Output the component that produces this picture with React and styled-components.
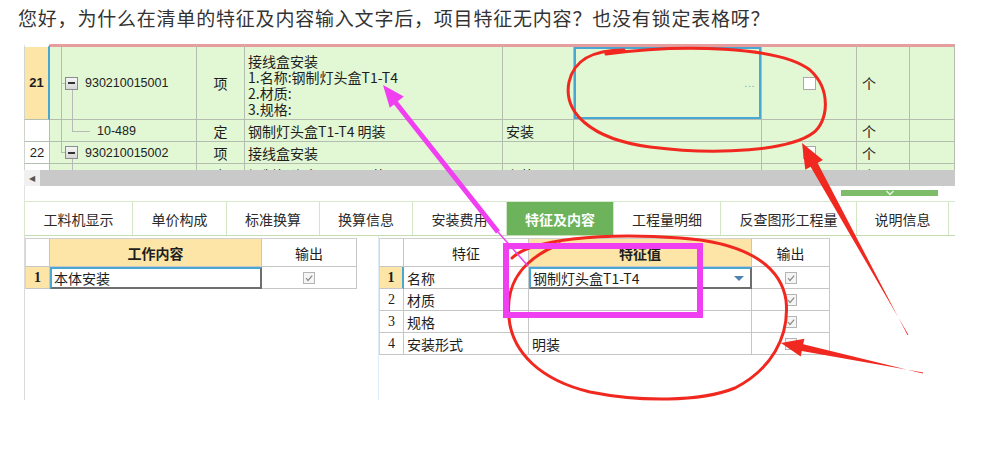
import React from 'react';
import styled, { createGlobalStyle } from 'styled-components';

const GlobalStyle = createGlobalStyle`
  body {
    margin: 0;
    background: #fff;
    font-family: "Noto Sans CJK SC", "Liberation Sans", sans-serif;
  }
`;

const GRID = '#b3bdb0';
const GREEN = '#e2f7d4';
const YELLOW = '#fce5a6';
const TEAL = '#4aa7d2';

const Page = styled.div`
  position: relative;
  width: 994px;
  height: 464px;
  overflow: hidden;
`;

const Question = styled.p`
  margin: 0;
  padding: 5px 0 0 18px;
  font-size: 19px;
  letter-spacing: 0.8px;
  line-height: 26px;
  color: #333;
`;

const Shot = styled.div`
  margin: 13px 0 0 24px;
  width: 931px;
  overflow: hidden;
`;

/* ---------- upper bill grid ---------- */

const TopTable = styled.div`
  height: 126px;
  overflow: hidden;
`;

const TopRow = styled.div`
  display: grid;
  grid-template-columns: 26px 147px 48px 258px 71px 188px 95px 53px 45px;
  height: ${(p) => p.$h}px;
`;

const Cell = styled.div`
  box-sizing: border-box;
  position: relative;
  background: ${(p) => p.$bg || GREEN};
  border-right: 1px solid ${GRID};
  border-bottom: 1px solid ${GRID};
  border-top: ${(p) => (p.$first ? '3px solid #e69d9d' : 'none')};
  box-shadow: ${(p) => (p.$sel ? `inset 0 0 0 2px ${TEAL}` : 'none')};
  display: flex;
  align-items: center;
  justify-content: ${(p) => p.$justify || 'flex-start'};
  padding: 0 ${(p) => p.$pr || 3}px 0 ${(p) => p.$pl || 3}px;
  font-size: 14px;
  line-height: 16px;
  color: #1e1e1e;
  white-space: nowrap;
  overflow: hidden;
`;

const NumCell = styled(Cell)`
  justify-content: center;
  border-left: 1px solid #cfd5cc;
  border-right: ${(p) => (p.$mark ? `2px solid ${TEAL}` : `1px solid ${GRID}`)};
  border-top: ${(p) => (p.$first ? '3px solid #fff' : 'none')};
  font-family: "Liberation Sans", sans-serif;
  font-size: 13px;
  font-weight: ${(p) => (p.$bold ? 700 : 400)};
`;

const Lines = styled(Cell)`
  display: block;
  padding-top: 6px;
`;

const Line = styled.div`
  height: 16px;
  line-height: 16px;
`;

const Code = styled.span`
  font-family: "Liberation Sans", sans-serif;
  font-size: 12.5px;
  color: #222;
`;

const TreeLine = styled.span`
  position: absolute;
  background: #b9b9b9;
  left: ${(p) => p.$x}px;
  top: ${(p) => p.$y}px;
  width: ${(p) => p.$w || 1}px;
  height: ${(p) => p.$h || 1}px;
`;

const Minus = styled.span`
  position: relative;
  box-sizing: border-box;
  width: 13px;
  height: 13px;
  margin-right: 7px;
  border: 1px solid #8c8c8c;
  background: linear-gradient(#f6f6f6, #d6d6d6);
  display: flex;
  align-items: center;
  justify-content: center;
  flex: none;

  &::after {
    content: '';
    width: 7px;
    height: 2px;
    background: #333;
  }
`;

const Dots = styled.span`
  color: #7ea6c6;
  font-family: "Liberation Sans", sans-serif;
  font-size: 11px;
  letter-spacing: 0.5px;
`;

const Box = styled.span`
  box-sizing: border-box;
  width: 13px;
  height: 13px;
  border: 1px solid #a9a9a9;
  background: #fff;
  display: flex;
  align-items: center;
  justify-content: center;
`;

const CheckBox = styled(Box)`
  width: 12px;
  height: 12px;
  border-color: #b4b4b4;
  background: #f5f5f5;
`;

const Check = () => (
  <CheckBox>
    <svg width="10" height="10" viewBox="0 0 10 10">
      <polyline points="2,5 4,7.5 8.2,2.6" fill="none" stroke="#8a8a8a" strokeWidth="1.2" />
    </svg>
  </CheckBox>
);

/* ---------- scrollbar + splitter ---------- */

const HScroll = styled.div`
  display: flex;
  height: 16px;
  background: #c9c9c9;
`;

const ScrollBtn = styled.div`
  width: 16px;
  background: #f0f0f0;
  display: flex;
  align-items: center;
  justify-content: center;
  color: #555;
  font-size: 8px;
  font-family: "DejaVu Sans", sans-serif;
`;

const Splitter = styled.div`
  box-sizing: border-box;
  height: 15px;
  padding: 4px 17px 0 0;
  display: flex;
  justify-content: flex-end;
  align-items: flex-start;
  border-left: 1px solid #e2e2e2;
`;

const Grip = styled.div`
  width: 97px;
  height: 6px;
  background: #7dbd69;
  display: flex;
  align-items: center;
  justify-content: center;
`;

/* ---------- tabs ---------- */

const Tabs = styled.div`
  box-sizing: border-box;
  display: flex;
  height: 35px;
  border-top: 1px solid #d6e9ca;
  border-bottom: 1px solid #c3dcb3;
  border-left: 1px solid #d6e9ca;
`;

const Tab = styled.div`
  box-sizing: border-box;
  flex: none;
  width: ${(p) => p.$w}px;
  border-right: 1px solid #d3e7c6;
  display: flex;
  align-items: center;
  justify-content: center;
  font-size: 14px;
  color: ${(p) => (p.$active ? '#fff' : '#2a2a2a')};
  background: ${(p) => (p.$active ? '#6cb35b' : '#fff')};
  font-weight: ${(p) => (p.$active ? 700 : 400)};
`;

const TabIcon = styled.span`
  margin-left: 5px;
  width: 10px;
  height: 12px;
  border: 2px solid #f06a4a;
  border-radius: 50%;
`;

/* ---------- lower panes ---------- */

const Lower = styled.div`
  display: flex;
  height: 164px;
`;

const LeftPane = styled.div`
  box-sizing: border-box;
  width: 354px;
  padding-top: 2px;
  border-left: 1px solid #dadada;
`;

const RightPane = styled.div`
  flex: 1;
  padding-top: 2px;
  border-left: 1px solid #dcebf6;
`;

const SubRow = styled.div`
  display: grid;
  grid-template-columns: ${(p) => p.$cols};
  height: ${(p) => p.$h || 22}px;
`;

const SubCell = styled.div`
  box-sizing: border-box;
  border-right: 1px solid #c6c6c6;
  border-bottom: 1px solid #c6c6c6;
  border-top: ${(p) => (p.$head ? '1px solid #d0d0d0' : 'none')};
  background: ${(p) => (p.$yellow ? YELLOW : '#fff')};
  display: flex;
  align-items: center;
  justify-content: ${(p) => (p.$center ? 'center' : 'flex-start')};
  padding: 0 3px;
  font-size: 14px;
  font-weight: ${(p) => (p.$bold ? 700 : 400)};
  color: #1e1e1e;
  white-space: nowrap;
  overflow: hidden;
`;

const SubNum = styled(SubCell)`
  justify-content: center;
  border-left: 1px solid #d6d6d6;
  border-right: ${(p) => (p.$mark ? `2px solid ${TEAL}` : '1px solid #c6c6c6')};
  font-family: "Liberation Serif", serif;
  font-size: 14px;
`;

const EditCell = styled(SubCell)`
  border-width: 2px;
  border-style: solid;
  border-color: ${TEAL} #6e6e6e #6e6e6e ${TEAL};
  justify-content: space-between;
  padding: 0 6px 0 2px;
`;

const DropArrow = styled.span`
  width: 0;
  height: 0;
  border-left: 5px solid transparent;
  border-right: 5px solid transparent;
  border-top: 5px solid #4f82b4;
`;

/* ---------- annotations ---------- */

const Marks = styled.svg`
  position: absolute;
  left: 0;
  top: 0;
  pointer-events: none;
`;

const treeParent = (
  <>
    <TreeLine $x={11} $y={0} $h={72} />
    <TreeLine $x={11} $y={36} $w={4} />
    <TreeLine $x={22} $y={43} $h={29} />
  </>
);

const leftCols = '25px 212px 95px';
const rightCols = '25px 125px 223px 78px';

const features = [
  ['1', '名称', '钢制灯头盒T1-T4'],
  ['2', '材质', ''],
  ['3', '规格', ''],
  ['4', '安装形式', '明装'],
];

const tabs = [
  ['工料机显示', 108],
  ['单价构成', 94],
  ['标准换算', 93],
  ['换算信息', 93],
  ['安装费用', 94],
  ['特征及内容', 107, true],
  ['工程量明细', 107],
  ['反查图形工程量', 136],
  ['说明信息', 92],
];

export default function App() {
  return (
    <Page>
      <GlobalStyle />
      <Question>您好，为什么在清单的特征及内容输入文字后，项目特征无内容？也没有锁定表格呀？</Question>

      <Shot>
        <TopTable>
          <TopRow $h={76}>
            <NumCell $first $bg={YELLOW} $bold $mark>21</NumCell>
            <Cell $first $pl={15}>
              {treeParent}
              <Minus />
              <Code>930210015001</Code>
            </Cell>
            <Cell $first $justify="center">项</Cell>
            <Lines $first>
              <Line>接线盒安装</Line>
              <Line>1.名称:钢制灯头盒T1-T4</Line>
              <Line>2.材质:</Line>
              <Line>3.规格:</Line>
            </Lines>
            <Cell $first />
            <Cell $first $sel $justify="flex-end" $pr={6}>
              <Dots>...</Dots>
            </Cell>
            <Cell $first $justify="center">
              <Box />
            </Cell>
            <Cell $first $pl={5}>个</Cell>
            <Cell $first />
          </TopRow>

          <TopRow $h={22}>
            <NumCell $bg="#fff" />
            <Cell $pl={47}>
              <TreeLine $x={11} $y={0} $h={21} />
              <TreeLine $x={22} $y={0} $h={11} />
              <TreeLine $x={22} $y={11} $w={18} />
              <Code>10-489</Code>
            </Cell>
            <Cell $justify="center">定</Cell>
            <Cell>钢制灯头盒T1-T4 明装</Cell>
            <Cell>安装</Cell>
            <Cell />
            <Cell />
            <Cell $pl={5}>个</Cell>
            <Cell />
          </TopRow>

          <TopRow $h={22}>
            <NumCell $bg="#fff">22</NumCell>
            <Cell $pl={15}>
              <TreeLine $x={11} $y={0} $h={11} />
              <TreeLine $x={11} $y={10} $w={4} />
              <TreeLine $x={22} $y={17} $h={4} />
              <Minus />
              <Code>930210015002</Code>
            </Cell>
            <Cell $justify="center">项</Cell>
            <Cell>接线盒安装</Cell>
            <Cell />
            <Cell />
            <Cell $justify="center">
              <Box />
            </Cell>
            <Cell $pl={5}>个</Cell>
            <Cell />
          </TopRow>

          <TopRow $h={22}>
            <NumCell $bg="#fff" />
            <Cell>
              <TreeLine $x={22} $y={0} $h={10} />
            </Cell>
            <Cell $justify="center">定</Cell>
            <Cell>钢制灯头盒T1-T4 明装</Cell>
            <Cell>安装</Cell>
            <Cell />
            <Cell />
            <Cell $pl={5}>个</Cell>
            <Cell />
          </TopRow>
        </TopTable>

        <HScroll>
          <ScrollBtn>◀</ScrollBtn>
        </HScroll>

        <Splitter>
          <Grip>
            <svg width="10" height="6" viewBox="0 0 10 6">
              <polyline points="1.5,1 5,4.5 8.5,1" fill="none" stroke="#e8f6e2" strokeWidth="1.3" />
            </svg>
          </Grip>
        </Splitter>

        <Tabs>
          {tabs.map(([label, w, active]) => (
            <Tab key={label} $w={w} $active={active}>
              {label}
            </Tab>
          ))}
          <Tab $w={60}>
            <TabIcon />
          </Tab>
        </Tabs>

        <Lower>
          <LeftPane>
            <SubRow $cols={leftCols} $h={29}>
              <SubNum $head />
              <SubCell $head $yellow $bold $center>工作内容</SubCell>
              <SubCell $head $center>输出</SubCell>
            </SubRow>
            <SubRow $cols={leftCols}>
              <SubNum $yellow $bold>1</SubNum>
              <EditCell>本体安装</EditCell>
              <SubCell $center>
                <Check />
              </SubCell>
            </SubRow>
          </LeftPane>

          <RightPane>
            <SubRow $cols={rightCols} $h={29}>
              <SubNum $head />
              <SubCell $head $center>特征</SubCell>
              <SubCell $head $yellow $bold $center>特征值</SubCell>
              <SubCell $head $center>输出</SubCell>
            </SubRow>
            {features.map(([n, name, value]) => (
              <SubRow key={n} $cols={rightCols}>
                <SubNum $yellow={n === '1'} $bold={n === '1'} $mark={n === '1'}>
                  {n}
                </SubNum>
                <SubCell>{name}</SubCell>
                {n === '1' ? (
                  <EditCell>
                    {value}
                    <DropArrow />
                  </EditCell>
                ) : (
                  <SubCell>{value}</SubCell>
                )}
                <SubCell $center>
                  <Check />
                </SubCell>
              </SubRow>
            ))}
          </RightPane>
        </Lower>
      </Shot>

      <Marks width="994" height="464" viewBox="0 0 994 464">
        {/* red loop around the empty feature cell */}
        <path
          d="M 606 54 C 680 44, 780 46, 810 70 C 832 90, 828 122, 813 133 C 790 150, 720 156, 650 147 C 590 139, 563 112, 569 82 C 574 60, 592 50, 624 50"
          fill="none"
          stroke="#f0281f"
          strokeWidth="3"
          strokeLinecap="round"
        />
        {/* red loop around the lower feature table */}
        <path
          d="M 512 258 C 530 240, 600 232, 680 238 C 740 242, 780 262, 786 300 C 790 338, 770 370, 735 388 C 700 402, 640 402, 590 392 C 540 380, 512 352, 509 318 C 506 290, 515 262, 560 244"
          fill="none"
          stroke="#f0281f"
          strokeWidth="3"
          strokeLinecap="round"
        />
        {/* red arrows */}
        <polygon points="802,143 805.3,169.7 810.6,166.8 908.4,334.8 907.6,335.2 817.6,163 822.9,160.1" fill="#f0281f" />
        <polygon points="781,343 800.7,356.4 801.8,351 923.2,372.5 922.8,373.5 803.2,344.2 804.4,338.8" fill="#f0281f" />
        {/* magenta box and arrow */}
        <rect x="506" y="246" width="194" height="69" fill="none" stroke="#f03ff0" strokeWidth="6" />
        <line x1="392" y1="98" x2="498" y2="232" stroke="#f03ff0" strokeWidth="5" />
        <line x1="498" y1="232" x2="528" y2="266" stroke="#f03ff0" strokeWidth="1.5" />
        <polygon points="383,85 389.8,107.8 403.8,96.6" fill="#f03ff0" />
      </Marks>
    </Page>
  );
}
